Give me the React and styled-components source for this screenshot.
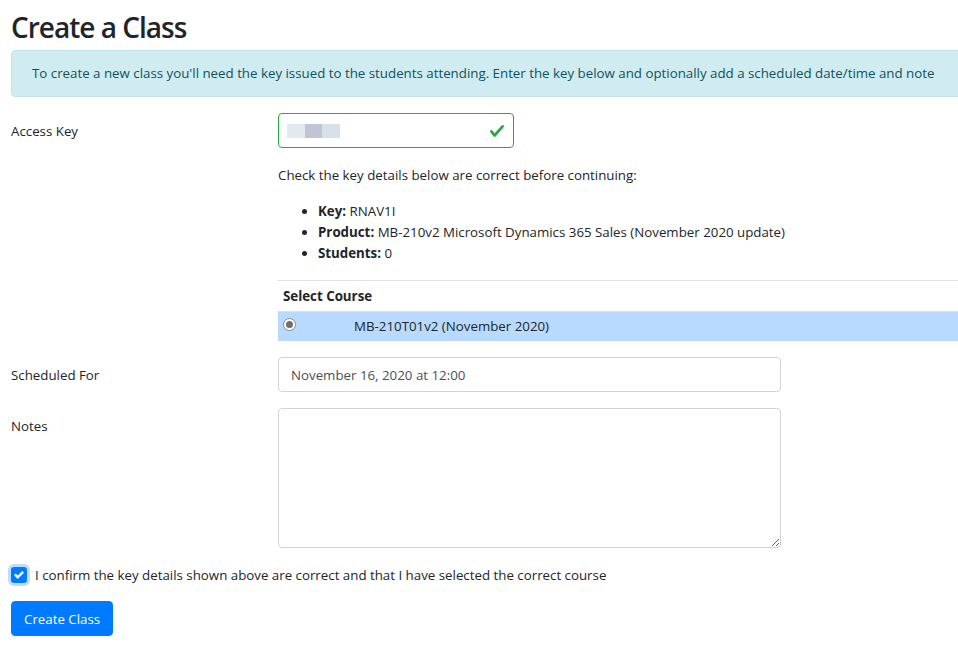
import React from "react";
import styled, { createGlobalStyle } from "styled-components";

const FONT = `"Open Sans", "Noto Sans", "Liberation Sans", sans-serif`;

const Global = createGlobalStyle`
  html, body { margin: 0; padding: 0; background: #fff; overflow: hidden; }
  body {
    font-family: ${FONT};
    font-size: 13.3px;
    line-height: 21px;
    color: #212529;
  }
  * { box-sizing: border-box; }
`;

const Page = styled.div`
  width: 1100px;
  padding: 10px 0 0 11px;
`;

const Title = styled.h2`
  margin: 0 0 6px;
  font-size: 28px;
  line-height: 34px;
  font-weight: 600;
  color: #212529;
  letter-spacing: -1px;
`;

const Alert = styled.div`
  background: #d1ecf1;
  border: 1px solid #bee5eb;
  border-radius: 4px;
  color: #0c5460;
  padding: 12px 20px;
  margin-bottom: 16px;
`;

const Row = styled.div`
  display: flex;
  margin-bottom: 16px;
`;

const Label = styled.label`
  width: 267px;
  flex: none;
  padding-top: 8px;
`;

const Col = styled.div`
  flex: 1;
  min-width: 0;
`;

const ValidField = styled.div`
  position: relative;
  width: 236px;
  height: 35px;
  border: 1px solid #28a745;
  border-radius: 4px;
  display: flex;
  align-items: center;
  padding: 0 8px;
`;

const Blur = styled.span`
  display: inline-block;
  width: ${(p) => p.$w}px;
  height: 14px;
  background: ${(p) => p.$c};
`;

const CheckIcon = styled.svg`
  position: absolute;
  right: 8px;
  top: 9px;
  width: 16px;
  height: 16px;
`;

const Help = styled.p`
  margin: 17px 0 15px;
`;

const List = styled.ul`
  margin: 0 0 16px;
  padding-left: 40px;
  li { line-height: 21px; }
  b { font-weight: 700; }
`;

const Table = styled.table`
  width: 100%;
  border-collapse: collapse;
  th, td {
    border-top: 1px solid #dee2e6;
    padding: 4.8px 4px 3.8px 5px;
    text-align: left;
    vertical-align: top;
    line-height: 21px;
  }
  th { font-weight: 700; }
`;

const SelRow = styled.tr`
  background: #b8daff;
`;

const RadioCell = styled.td`
  width: 71px;
`;

const Radio = styled.span`
  display: inline-block;
  width: 13px;
  height: 13px;
  margin-top: 1px;
  border-radius: 50%;
  border: 1px solid #8a8a8a;
  background: #fff;
  position: relative;
  &::after {
    content: "";
    position: absolute;
    left: 2px;
    top: 2px;
    width: 7px;
    height: 7px;
    border-radius: 50%;
    background: #6e6e6e;
  }
`;

const Field = styled.div`
  width: 503px;
  height: 35px;
  border: 1px solid #ced4da;
  border-radius: 4px;
  padding: 7px 12px 5px;
  color: #495057;
`;

const TextArea = styled.textarea`
  display: block;
  width: 503px;
  height: 140px;
  border: 1px solid #ced4da;
  border-radius: 4px;
  padding: 6px 12px;
  font: inherit;
  color: #495057;
  margin: 0;
`;

const CheckRow = styled.div`
  display: flex;
  align-items: center;
  gap: 8px;
  margin-bottom: 16px;
  height: 21px;
`;

const ConfirmText = styled.span`
  padding-top: 1px;
`;

const Box = styled.span`
  width: 16px;
  height: 16px;
  border-radius: 3px;
  background: #007bff;
  box-shadow: 0 0 0 3px rgba(0, 123, 255, 0.25);
  display: flex;
  align-items: center;
  justify-content: center;
  flex: none;
`;

const Button = styled.button`
  font: inherit;
  background: #007bff;
  color: #fff;
  border: 1px solid #007bff;
  border-radius: 4px;
  height: 35px;
  padding: 7px 12px 5px;
  cursor: pointer;
`;

export default function App() {
  return (
    <Page>
      <Global />
      <Title>Create a Class</Title>
      <Alert>
        To create a new class you'll need the key issued to the students attending. Enter the key below and optionally add a scheduled date/time and note
      </Alert>

      <Row>
        <Label>Access Key</Label>
        <Col>
          <ValidField>
            <Blur $w={18} $c="#e3eaef" />
            <Blur $w={17} $c="#c1c3d6" />
            <Blur $w={18} $c="#d6e1ec" />
            <CheckIcon viewBox="0 0 8 8">
              <path
                fill="#28a745"
                d="M2.3 6.73L.6 4.53c-.4-1.04.46-1.4 1.1-.8l1.1 1.4 3.4-3.8c.6-.63 1.6-.27 1.2.7l-4 4.6c-.43.5-.8.4-1.1.1z"
              />
            </CheckIcon>
          </ValidField>
          <Help>Check the key details below are correct before continuing:</Help>
          <List>
            <li><b>Key:</b> RNAV1I</li>
            <li><b>Product:</b> MB-210v2 Microsoft Dynamics 365 Sales (November 2020 update)</li>
            <li><b>Students:</b> 0</li>
          </List>
          <Table>
            <thead>
              <tr>
                <th colSpan={2}>Select Course</th>
              </tr>
            </thead>
            <tbody>
              <SelRow>
                <RadioCell><Radio /></RadioCell>
                <td>MB-210T01v2 (November 2020)</td>
              </SelRow>
            </tbody>
          </Table>
        </Col>
      </Row>

      <Row>
        <Label>Scheduled For</Label>
        <Col>
          <Field>November 16, 2020 at 12:00</Field>
        </Col>
      </Row>

      <Row>
        <Label>Notes</Label>
        <Col>
          <TextArea />
        </Col>
      </Row>

      <CheckRow>
        <Box>
          <svg width="10" height="10" viewBox="0 0 8 8">
            <path
              fill="#fff"
              d="M6.564.75l-3.59 3.612-1.538-1.55L0 4.26l2.974 2.99L8 2.193z"
            />
          </svg>
        </Box>
        <ConfirmText>I confirm the key details shown above are correct and that I have selected the correct course</ConfirmText>
      </CheckRow>

      <Button>Create Class</Button>
    </Page>
  );
}
